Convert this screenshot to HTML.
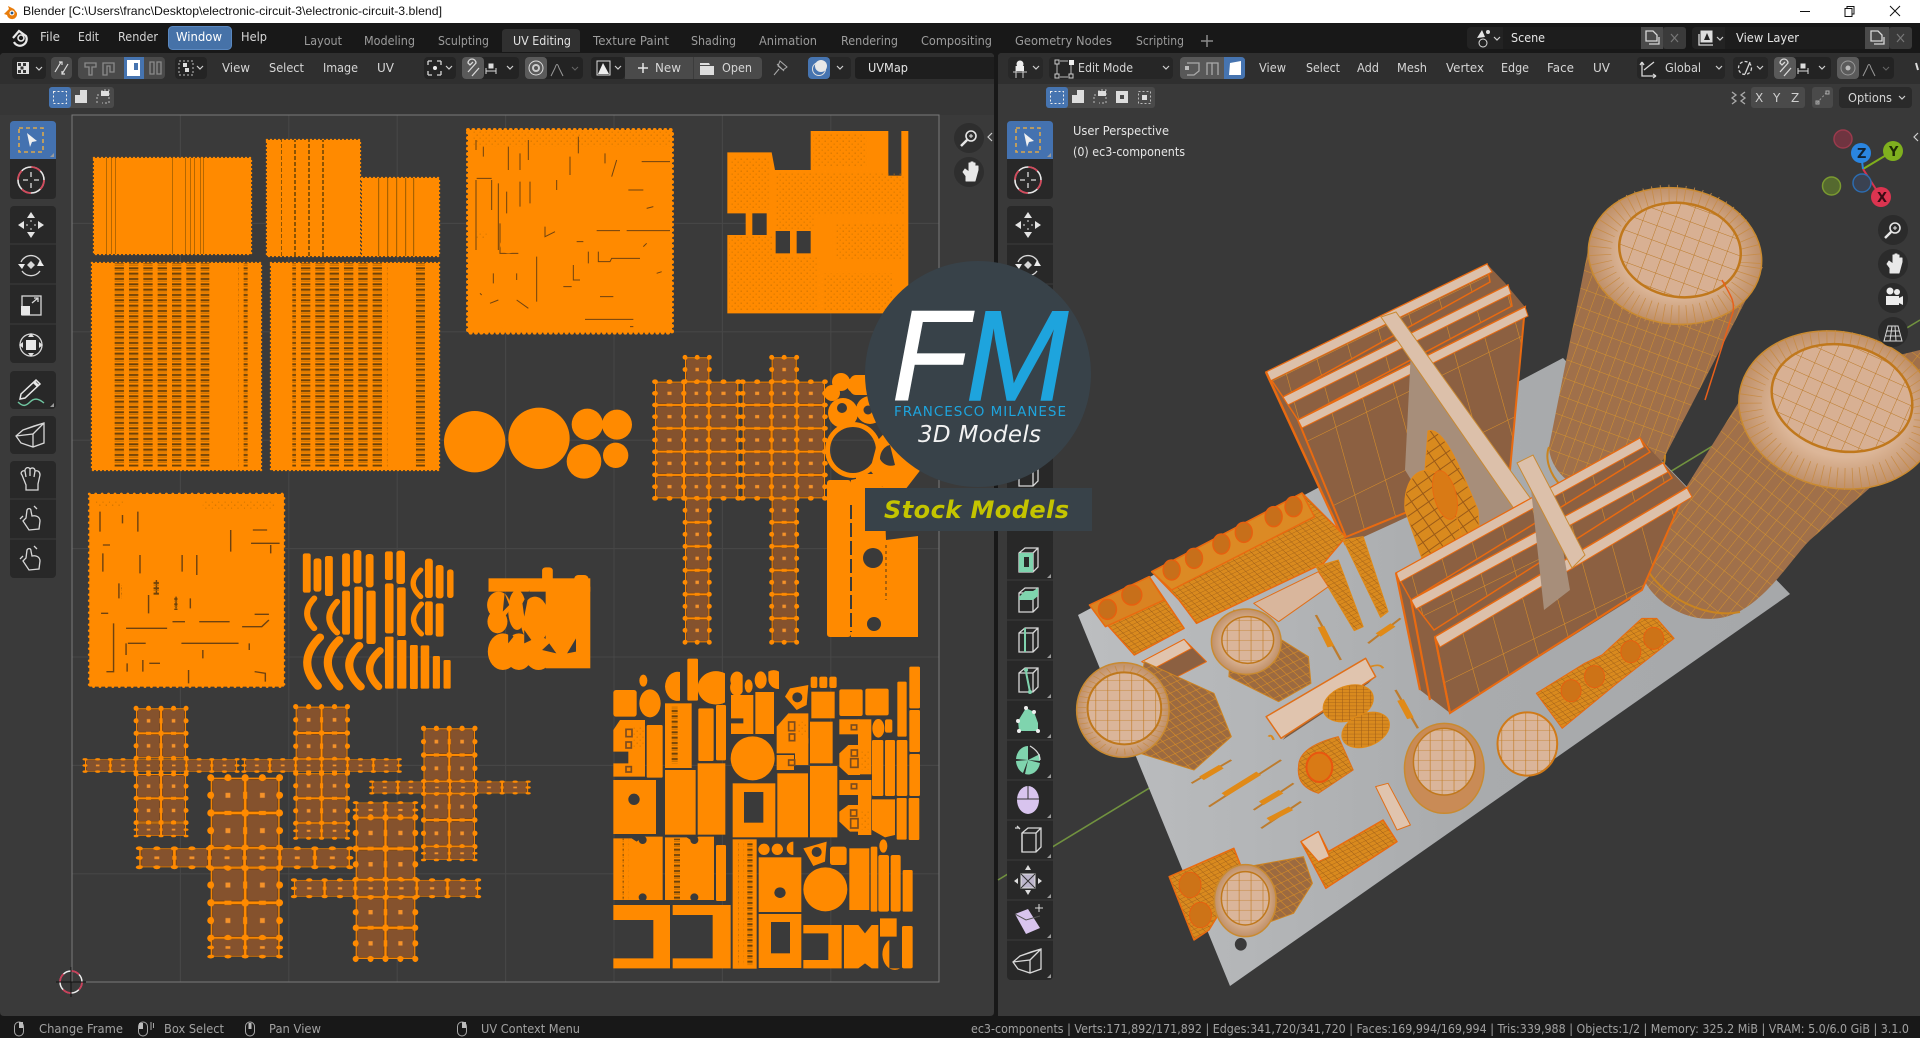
<!DOCTYPE html>
<html><head><meta charset="utf-8"><title>Blender</title>
<style>
html,body{margin:0;padding:0;background:#181818;overflow:hidden}
svg{display:block}
text{font-family:"DejaVu Sans",sans-serif;font-size:12px}
.m{fill:#d6d6d6}.t{fill:#9c9c9c}.s{fill:#a2a2a2;font-size:12px}
.i{fill:none;stroke:#d8d8d8;stroke-width:1.3}
.w{fill:#e6e6e6}.ch{fill:none;stroke:#cfcfcf;stroke-width:1.2}
.o{fill:#ff8a00}
.e{fill:#ff8a00;stroke:#ff8a00;stroke-width:7;stroke-dasharray:0 12;stroke-linecap:round}
.k{stroke:#6e4210;stroke-width:3;fill:none}
.n{vector-effect:non-scaling-stroke}
rect[fill="url(#cell)"]{stroke:#ff8a00;stroke-width:20;stroke-dasharray:0 50;stroke-linecap:round}
</style></head><body>
<svg width="1920" height="1038" viewBox="0 0 1920 1038" xmlns="http://www.w3.org/2000/svg">
<defs>
<pattern id="cell" width="100" height="100" patternUnits="userSpaceOnUse">
<rect width="100" height="100" fill="#ff8a00"/>
<rect x="5" y="5" width="90" height="90" fill="#85522d" stroke="#6a3a10" stroke-width="2"/>
<rect x="43" y="43" width="14" height="14" fill="#f5922a"/>
<rect x="40" y="0" width="20" height="6" fill="#ff8a00"/><rect x="40" y="94" width="20" height="6" fill="#ff8a00"/>
<rect x="0" y="40" width="6" height="20" fill="#ff8a00"/><rect x="94" y="40" width="6" height="20" fill="#ff8a00"/>
<circle cx="0" cy="0" r="11" fill="#ff8a00"/><circle cx="100" cy="0" r="11" fill="#ff8a00"/><circle cx="0" cy="100" r="11" fill="#ff8a00"/><circle cx="100" cy="100" r="11" fill="#ff8a00"/>
</pattern>
<pattern id="dash" width="43" height="16" patternUnits="userSpaceOnUse"><rect x="0" y="2" width="28" height="6" fill="#6e4208"/><rect x="0" y="11" width="28" height="2" fill="#a96200"/></pattern>
<pattern id="vdash" width="14" height="6" patternUnits="userSpaceOnUse"><rect x="0" y="0" width="2" height="4" fill="#8d5403"/></pattern>
<pattern id="dots" width="18" height="18" patternUnits="userSpaceOnUse"><rect x="2" y="2" width="3" height="3" fill="#b86800"/><rect x="11" y="11" width="3" height="3" fill="#c97200"/></pattern>
<pattern id="gridf" width="108.4" height="108.4" patternUnits="userSpaceOnUse" x="72" y="115"><rect width="108.4" height="108.4" fill="none" stroke="#474747" stroke-width="1"/></pattern>
<pattern id="wb" width="34" height="70" patternUnits="userSpaceOnUse" patternTransform="matrix(.9 -.44 .27 .97 0 0)"><rect width="34" height="70" fill="#8c6041"/><path d="M0 0H34M0 0V70" stroke="#dd9128" stroke-width="1.100"/></pattern>
<pattern id="cy1" width="10" height="18" patternUnits="userSpaceOnUse" patternTransform="rotate(20)"><rect width="10" height="18" fill="#a0704a"/><path d="M0 0H10M0 0V18" stroke="#d3922e" stroke-width="1"/></pattern>
<pattern id="cy2" width="10" height="18" patternUnits="userSpaceOnUse" patternTransform="rotate(38)"><rect width="10" height="18" fill="#a0704a"/><path d="M0 0H10M0 0V18" stroke="#d3922e" stroke-width="1"/></pattern>
<pattern id="top" width="15" height="15" patternUnits="userSpaceOnUse" patternTransform="rotate(12)"><rect width="15" height="15" fill="#d8b093"/><path d="M0 0H15M0 0V15" stroke="#bb7a28" stroke-width="1"/></pattern>
<pattern id="top2" width="24" height="30" patternUnits="userSpaceOnUse"><rect width="24" height="30" fill="#dab59a"/><path d="M0 0H24M0 0V30" stroke="#c07a22" stroke-width="2.500"/></pattern>
<pattern id="fine" width="14" height="10" patternUnits="userSpaceOnUse" patternTransform="rotate(-35)"><rect width="14" height="10" fill="#d98a1e"/><path d="M0 0H14M0 0V10" stroke="#9a5a18" stroke-width="2"/></pattern>
<pattern id="fine3" width="16" height="22" patternUnits="userSpaceOnUse" patternTransform="rotate(-35)"><rect width="16" height="22" fill="#9c6a40"/><path d="M0 0H16M0 0V22" stroke="#d68c28" stroke-width="3"/></pattern>
<linearGradient id="pl" x1="0" y1="0" x2="1" y2="0"><stop offset="0" stop-color="#bcbec0"/><stop offset=".55" stop-color="#a9abad"/><stop offset="1" stop-color="#a6a8aa"/></linearGradient>
<radialGradient id="capb" cx=".5" cy=".5" r=".5"><stop offset=".6" stop-color="#dcb698"/><stop offset="1" stop-color="#c09068"/></radialGradient>

<g id="ic-sel"><rect x="-12" y="-12" width="24" height="24" fill="none" stroke="#d9a84e" stroke-width="1.6" stroke-dasharray="4 3"/><path d="M-4 -7L6 1L1 2L-1 7Z" fill="#f0f0f0"/></g>
<g id="ic-cur"><circle r="13" fill="none" stroke="#e8e8e8" stroke-width="1.6"/><circle r="13" fill="none" stroke="#d24a5c" stroke-width="1.8" stroke-dasharray="10 10.4"/><path d="M0 -8V-3M0 3V8M-8 0H-3M3 0H8" stroke="#ddd" stroke-width="1.3"/></g>
<g id="ic-mov" fill="#e4e4e4"><path d="M0 -13L4 -7H-4ZM0 13L4 7H-4ZM-13 0L-7 -4V4ZM13 0L7 -4V4Z"/><path d="M0 -5V-3M0 3V5M-5 0H-3M3 0H5" stroke="#e4e4e4"/></g>
<g id="ic-rot"><path d="M-10 -3A11 11 0 0 1 10 -3M9 6A11 11 0 0 1 -9 6" class="i"/><path d="M0 -4L4 0L0 4L-4 0Z" fill="#d8d8d8"/><path d="M-13 -1L-6 -1L-9 4ZM13 1L6 1L9 -5Z" fill="#ececec"/></g>
<g id="ic-scl"><rect x="-9" y="-9" width="19" height="19" class="i"/><rect x="-10" y="1" width="9" height="9" fill="#e8e8e8"/><path d="M1 -2L7 -7M3 -7H7V-3" class="i"/></g>
<g id="ic-trn"><circle r="11" class="i"/><rect x="-5" y="-5" width="10" height="10" fill="#e8e8e8"/><path d="M0 -12L3 -8H-3ZM0 12L3 8H-3ZM-12 0L-8 -3V3ZM12 0L8 -3V3Z" fill="#e0e0e0"/></g>
<g id="ic-ann"><path d="M-10 3L5 -11L9 -7L-6 7L-11 8Z" fill="none" stroke="#e8e8e8" stroke-width="1.500"/><path d="M3 -9L7 -5" stroke="#e8e8e8" stroke-width="3"/><path d="M-13 11C-8 16 -5 15 -1 11C3 7 7 7 13 12" fill="none" stroke="#6fc5a0" stroke-width="1.4"/></g>
<g id="ic-cube"><path d="M-15 2L-8 -4L13 -11V9L2 13L-10 9ZM-8 -4L3 -8L13 -11M2 13V0L-15 2M2 0L13 -11" class="i"/></g>
<g id="ic-hnd"><path d="M-9 -4C-11 -6 -9 -9 -6 -8V-9C-5 -12 -2 -12 -1 -10C1 -12 4 -11 4 -8C7 -9 9 -7 9 -4L7 5V11H-5V6ZM-6 -8L-5 -2M-1 -10V-3M4 -8L3 -2" class="i"/></g>
<g id="ic-hnd2"><path d="M-4 -8C-3 -10 0 -10 0 -7L1 -2C5 -3 9 -1 9 3L8 11L-2 12L-8 3L-5 0Z" class="i"/><path d="M-11 1L-8 -2M3 -12L6 -9" class="i"/></g>
<g id="ic-box"><path d="M-9 -7L-3 -12H10V7L5 12H-9ZM-9 -7H5V12M5 -7L10 -12" class="i"/></g>
</defs>

<!-- base -->
<rect width="1920" height="1038" fill="#181818"/>
<rect width="1920" height="23" fill="#fff"/>
<path d="M4 14L9 9L8 6L14 9L17 13A5 5 0 0 1 7 15Z" fill="#e87d0d"/><circle cx="12" cy="13" r="2.500" fill="#fff"/><circle cx="12" cy="13" r="1.400" fill="#265787"/>
<text x="23" y="15" textLength="419" lengthAdjust="spacingAndGlyphs" style="font-family:'Liberation Sans',sans-serif;font-size:12px" fill="#111">Blender [C:\Users\franc\Desktop\electronic-circuit-3\electronic-circuit-3.blend]</text>
<path d="M1800 11.5H1810" stroke="#111" stroke-width="1"/>
<rect x="1845" y="8.5" width="7" height="8" fill="#fff" stroke="#111"/><path d="M1847 8V6.5H1854V14H1852.500" fill="none" stroke="#111"/>
<path d="M1890 6L1900 16M1900 6L1890 16" stroke="#111"/>

<!-- top bar -->
<g fill="none"><path d="M13 38L19 31L26 36A6 6 0 0 1 14 42" stroke="#e8e8e8" stroke-width="2.2"/><circle cx="21" cy="38" r="3" stroke="#e8e8e8" stroke-width="1.6"/></g>
<text class="m" x="40" y="41" textLength="20" lengthAdjust="spacingAndGlyphs">File</text>
<text class="m" x="78" y="41" textLength="21" lengthAdjust="spacingAndGlyphs">Edit</text>
<text class="m" x="118" y="41" textLength="40" lengthAdjust="spacingAndGlyphs">Render</text>
<rect x="168.500" y="26.500" width="63" height="23" rx="4" fill="#4672a8" stroke="#5a88c0"/>
<text fill="#fff" x="176" y="41" textLength="46" lengthAdjust="spacingAndGlyphs">Window</text>
<text class="m" x="241" y="41" textLength="26" lengthAdjust="spacingAndGlyphs">Help</text>
<path d="M502 52V33Q502 29 506 29H576Q580 29 580 33V52Z" fill="#303030"/>
<g class="t">
<text x="304" y="45" textLength="38" lengthAdjust="spacingAndGlyphs">Layout</text>
<text x="364" y="45" textLength="51" lengthAdjust="spacingAndGlyphs">Modeling</text>
<text x="438" y="45" textLength="51" lengthAdjust="spacingAndGlyphs">Sculpting</text>
<text x="513" y="45" textLength="58" lengthAdjust="spacingAndGlyphs" style="fill:#e4e4e4">UV Editing</text>
<text x="593" y="45" textLength="76" lengthAdjust="spacingAndGlyphs">Texture Paint</text>
<text x="691" y="45" textLength="45" lengthAdjust="spacingAndGlyphs">Shading</text>
<text x="759" y="45" textLength="58" lengthAdjust="spacingAndGlyphs">Animation</text>
<text x="841" y="45" textLength="57" lengthAdjust="spacingAndGlyphs">Rendering</text>
<text x="921" y="45" textLength="71" lengthAdjust="spacingAndGlyphs">Compositing</text>
<text x="1015" y="45" textLength="97" lengthAdjust="spacingAndGlyphs">Geometry Nodes</text>
<text x="1136" y="45" textLength="48" lengthAdjust="spacingAndGlyphs">Scripting</text>
</g>
<path d="M1207 35V47M1201 41H1213" stroke="#8a8a8a" stroke-width="1.5"/>

<!-- scene -->
<rect x="1467" y="27" width="219" height="22" rx="4" fill="#232323"/>
<rect x="1503" y="27" width="138" height="22" fill="#1d1d1d"/>
<rect x="1641" y="27" width="22" height="22" fill="#4a4a4a"/><rect x="1663" y="27" width="23" height="22" rx="3" fill="#3a3a3a"/>
<circle cx="1483" cy="43" r="4" fill="none" stroke="#ddd"/><path d="M1477 38L1482 30L1485 37Z" fill="#e4e4e4"/><circle cx="1488" cy="32" r="2" fill="#ddd"/>
<path d="M1494 37L1497 40L1500 37" class="ch"/>
<text class="w" x="1511" y="42" textLength="34" lengthAdjust="spacingAndGlyphs">Scene</text>
<path d="M1646 41V31H1653L1657 35V41ZM1649 44H1659V37" class="i"/>
<path d="M1671 34L1678 42M1678 34L1671 42" stroke="#777" stroke-width="1.2"/>
<rect x="1692" y="27" width="220" height="22" rx="4" fill="#232323"/>
<rect x="1725" y="27" width="140" height="22" fill="#1d1d1d"/>
<rect x="1865" y="27" width="24" height="22" fill="#4a4a4a"/><rect x="1889" y="27" width="23" height="22" rx="3" fill="#3a3a3a"/>
<rect x="1701" y="31" width="11" height="11" fill="#ddd" stroke="#ddd"/><path d="M1704 40L1707 33L1710 40Z" fill="#232323"/><path d="M1699 34V45H1713" class="i"/>
<path d="M1717 37L1720 40L1723 37" class="ch"/>
<text class="w" x="1736" y="42" textLength="63" lengthAdjust="spacingAndGlyphs">View Layer</text>
<path d="M1871 41V31H1878L1882 35V41ZM1874 44H1884V37" class="i"/>
<path d="M1897 34L1904 42M1904 34L1897 42" stroke="#777" stroke-width="1.2"/>

<!-- LEFT EDITOR -->
<path d="M0 57Q0 53 4 53H990Q994 53 994 57V1012Q994 1016 990 1016H4Q0 1016 0 1012Z" fill="#3a3a3a"/>
<path d="M0 84V57Q0 53 4 53H990Q994 53 994 57V84Z" fill="#2f2f2f"/>
<rect x="0" y="84" width="994" height="31" fill="#363636"/>
<rect x="72" y="115" width="867" height="867" fill="url(#gridf)"/>
<rect x="72" y="115" width="867" height="867" fill="none" stroke="#7b7b7b"/>

<!-- RIGHT EDITOR -->
<path d="M998 57Q998 53 1002 53H1916Q1920 53 1920 57V1016H998Z" fill="#393939"/>
<path d="M998 84V57Q998 53 1002 53H1920V84Z" fill="#2f2f2f"/>

<!-- 3D SCENE -->
<g>
<path d="M998 880L1920 320" stroke="#71923f" stroke-width="1.6"/>
<path d="M1078 615L1563 358L1790 594L1230 986Z" fill="url(#pl)"/>

<!-- heat sink back -->
<path d="M1266 372L1346 545L1510 470L1525 307L1505 283L1487 264Z" fill="#8c6041"/>
<path d="M1266 372L1487 264L1490 282L1283 397Z" fill="url(#wb)" stroke="#e96a10" stroke-width="1.500"/>
<path d="M1283 397L1508 285L1512 306L1298 420Z" fill="url(#wb)" stroke="#e96a10" stroke-width="1.500"/>
<path d="M1298 420L1525 307L1510 470L1346 537Z" fill="url(#wb)" stroke="#e96a10" stroke-width="2"/>
<path d="M1266 372L1487 264L1492 272L1270 381Z" fill="#dcc0aa" stroke="#e96a10"/>
<path d="M1283 397L1508 285L1511 294L1288 405Z" fill="#dcc0aa" stroke="#e96a10"/>
<path d="M1298 420L1525 307L1528 316L1302 428Z" fill="#dcc0aa" stroke="#e96a10"/>
<path d="M1266 372L1346 545" stroke="#e96a10" stroke-width="2.500" fill="none"/>
<path d="M1411 350L1500 480L1524 530L1480 590L1405 470Z" fill="#a78e7a"/>
<path d="M1381 317L1396 312L1575 560L1560 575Z" fill="#dcc0aa" stroke="#c98a34"/>
<path d="M1428 431C1445 425 1465 480 1478 510L1480 540L1460 552L1425 470Z" fill="url(#fine)" stroke="#e58a18"/>
<path d="M1405 510C1402 470 1432 455 1450 490L1470 570L1440 610Z" fill="url(#fine)" stroke="#e58a18"/>
<ellipse cx="1445" cy="495" rx="11" ry="25" transform="rotate(-15 1445 495)" fill="#d97a15" stroke="#e96a10"/>

<!-- capacitor 1 -->
<path d="M1588 250L1549 447C1550 480 1600 520 1663 460L1763 267Z" fill="url(#cy1)"/>
<path d="M1549 447C1540 470 1570 510 1610 500C1640 495 1665 480 1665 455" fill="none" stroke="#c98420" stroke-width="2"/>
<ellipse cx="1675" cy="256" rx="87" ry="68" transform="rotate(8 1675 256)" fill="url(#capb)" stroke="#c98a30" stroke-width="1.500"/>
<ellipse cx="1675" cy="256" rx="75" ry="60" transform="rotate(8 1675 256)" fill="none" stroke="#c78c48" stroke-width="22" stroke-dasharray=".8 7"/>
<ellipse cx="1680" cy="250" rx="61" ry="47" transform="rotate(8 1680 250)" fill="url(#top)" stroke="#c0781c" stroke-width="2.500"/>
<path d="M1722 280C1730 295 1735 300 1733 312L1705 400" fill="none" stroke="#e8601a" stroke-width="1.500"/>

<!-- capacitor 2 -->
<path d="M1745 392L1641 560C1636 590 1680 625 1720 618C1760 612 1790 560 1810 540L1925 440L1920 350Z" fill="url(#cy2)"/>
<path d="M1641 555C1650 590 1700 620 1740 612" fill="none" stroke="#c98420" stroke-width="2"/>
<ellipse cx="1838" cy="410" rx="100" ry="78" transform="rotate(12 1838 410)" fill="url(#capb)" stroke="#c98a30" stroke-width="1.500"/>
<ellipse cx="1838" cy="410" rx="88" ry="68" transform="rotate(12 1838 410)" fill="none" stroke="#c78c48" stroke-width="22" stroke-dasharray=".8 7"/>
<ellipse cx="1842" cy="398" rx="71" ry="53" transform="rotate(12 1842 398)" fill="url(#top)" stroke="#c0781c" stroke-width="2.500"/>

<!-- heat sink front -->
<path d="M1396 573L1640 438L1663 463L1687 488L1630 600L1450 713L1420 690Z" fill="#8c6041"/>
<path d="M1396 573L1640 438L1650 452L1411 600Z" fill="url(#wb)" stroke="#e96a10" stroke-width="1.500"/>
<path d="M1411 600L1663 463L1672 478L1434 630Z" fill="url(#wb)" stroke="#e96a10" stroke-width="1.500"/>
<path d="M1435 637L1687 488L1642 590L1450 713Z" fill="url(#wb)" stroke="#e96a10" stroke-width="2"/>
<path d="M1396 573L1640 438L1644 447L1400 582Z" fill="#dcc0aa" stroke="#e96a10"/>
<path d="M1411 600L1663 463L1668 472L1416 609Z" fill="#dcc0aa" stroke="#e96a10"/>
<path d="M1435 637L1687 488L1692 497L1440 647Z" fill="#dcc0aa" stroke="#e96a10"/>
<path d="M1396 573L1420 690M1411 600L1430 700M1435 637L1450 713" stroke="#e96a10" stroke-width="2.200" fill="none"/>
<path d="M1530 480L1556 510L1570 590L1544 610Z" fill="#a78e7a"/>
<path d="M1517 463L1533 455L1585 555L1572 568Z" fill="#dcc0aa" stroke="#c98a34"/>

<!-- small components (crop coords) -->
<g transform="translate(1000,540) scale(.4975,.3333)" stroke-linejoin="round">
<path d="M180 195L300 110L370 265L270 345Z" fill="url(#fine)" stroke="#e96a10" stroke-width="1.500" vector-effect="non-scaling-stroke"/>
<path d="M180 195L300 110L330 180L212 260Z" fill="#d98322" stroke="#e96a10" stroke-width="1.500" vector-effect="non-scaling-stroke"/>
<ellipse cx="216" cy="208" rx="18" ry="30" fill="#c76f1a" stroke="#e6600f" stroke-width="1.500" vector-effect="non-scaling-stroke"/><ellipse cx="265" cy="165" rx="20" ry="30" fill="#c76f1a" stroke="#e6600f" stroke-width="1.500" vector-effect="non-scaling-stroke"/>
<path d="M305 95L607 -141L695 -9L650 70L395 250L360 180Z" fill="url(#fine)" stroke="#e96a10" stroke-width="1.500" vector-effect="non-scaling-stroke"/>
<path d="M305 95L607 -141L632 -70L345 150Z" fill="#dc8a24" stroke="#e96a10" stroke-width="1.500" vector-effect="non-scaling-stroke"/>
<g fill="#c76f1a" stroke="#e6600f" stroke-width="1.500"><ellipse class="n" cx="345" cy="90" rx="17" ry="30"/><ellipse class="n" cx="390" cy="55" rx="17" ry="30"/><ellipse class="n" cx="445" cy="12" rx="17" ry="30"/><ellipse class="n" cx="490" cy="-23" rx="17" ry="30"/><ellipse class="n" cx="550" cy="-70" rx="17" ry="30"/><ellipse class="n" cx="590" cy="-100" rx="17" ry="30"/></g>
<path d="M635 80L680 60L730 260L712 272Z" fill="url(#fine)" stroke="#e08a18" vector-effect="non-scaling-stroke"/>
<path d="M690 0L730 -10L780 215L765 232Z" fill="url(#fine)" stroke="#e08a18" vector-effect="non-scaling-stroke"/>
<path d="M510 190L640 95L660 140L560 245Z" fill="#d9b69c" stroke="#e0701a" vector-effect="non-scaling-stroke"/>
<path d="M285 365L370 298L415 365L350 415Z" fill="#8c6041" stroke="#e96a10" vector-effect="non-scaling-stroke"/>
<path d="M285 365L370 298L385 325L310 385Z" fill="#e0c4ae" stroke="#e96a10" vector-effect="non-scaling-stroke"/>
<!-- cyl mid -->
<path d="M470 210L620 350L625 430L560 485L460 410Z" fill="url(#fine3)" stroke="#cf8420" vector-effect="non-scaling-stroke"/>
<ellipse cx="495" cy="305" rx="70" ry="98" fill="url(#capb)" stroke="#c98a30" stroke-width="1.500" vector-effect="non-scaling-stroke"/>
<ellipse cx="498" cy="300" rx="52" ry="70" fill="url(#top2)" stroke="#bf781c" stroke-width="1.500" vector-effect="non-scaling-stroke"/>
<!-- cyl front-left -->
<path d="M290 365L430 460L465 590L390 690L260 630Z" fill="url(#fine3)" stroke="#cf8420" vector-effect="non-scaling-stroke"/>
<ellipse cx="247" cy="510" rx="93" ry="142" fill="url(#capb)" stroke="#c98a30" stroke-width="1.500" vector-effect="non-scaling-stroke"/>
<ellipse cx="247" cy="510" rx="83" ry="125" fill="none" stroke="#c78c48" stroke-width="18" stroke-dasharray="2 14"/>
<ellipse cx="250" cy="505" rx="74" ry="108" fill="url(#top2)" stroke="#bf781c" stroke-width="2" vector-effect="non-scaling-stroke"/>
<!-- strip -->
<path d="M590 560L755 410L740 430L568 600Z" fill="#7a5a40"/>
<path d="M535 530L735 355L755 410L565 595Z" fill="#e0c4ae" stroke="#e0701a" stroke-width="1.500" vector-effect="non-scaling-stroke"/>
<path d="M745 380Q765 370 770 385M540 590Q545 580 550 600" stroke="#d88a20" stroke-width="5" fill="none"/>
<!-- half rounds -->
<ellipse cx="700" cy="490" rx="45" ry="60" transform="rotate(35 700 490)" fill="url(#fine)" stroke="#e08a18" vector-effect="non-scaling-stroke"/>
<ellipse cx="735" cy="570" rx="42" ry="58" transform="rotate(35 735 570)" fill="url(#fine)" stroke="#e08a18" vector-effect="non-scaling-stroke"/>
<!-- round thing -->
<path d="M600 680Q600 620 680 590L710 690L640 760Q595 740 600 680Z" fill="url(#fine)" stroke="#e0701a" vector-effect="non-scaling-stroke"/>
<ellipse cx="642" cy="682" rx="26" ry="44" fill="#d97a15" stroke="#e9560f" stroke-width="2" vector-effect="non-scaling-stroke"/>
<!-- resistors -->
<g stroke="#bd7c2e" stroke-width="5" fill="none"><path d="M385 730L465 660M420 800L565 660M510 810L590 730M525 865L605 785M635 225L685 360M795 450L840 565M740 310L805 235"/></g>
<g stroke="#e08a18" stroke-width="14" fill="none"><path d="M405 715L445 680M450 765L520 700M525 790L565 755M540 840L585 805M645 260L665 320M805 480L825 535M760 285L790 255"/></g>
<!-- strip small -->
<path d="M755 740L780 730L825 855L798 870Z" fill="#e0c4ae" stroke="#e0701a" vector-effect="non-scaling-stroke"/>
<!-- L -->
<path d="M605 905L640 875L660 935L770 840L798 905L655 1045Z" fill="url(#fine)" stroke="#e96a10" stroke-width="1.500" vector-effect="non-scaling-stroke"/>
<path d="M605 905L640 875L662 950L640 965Z" fill="#e0c4ae" stroke="#e96a10" vector-effect="non-scaling-stroke"/>
<!-- circles -->
<ellipse cx="893" cy="685" rx="80" ry="135" fill="#c98b56" stroke="#c98a30" stroke-width="1.500" vector-effect="non-scaling-stroke"/>
<ellipse cx="893" cy="665" rx="62" ry="100" fill="url(#top2)" stroke="#c0781c" stroke-width="1.500" vector-effect="non-scaling-stroke"/>
<ellipse cx="1060" cy="612" rx="60" ry="95" fill="url(#top2)" stroke="#d07a18" stroke-width="2" vector-effect="non-scaling-stroke"/>
<!-- connector right -->
<path d="M1078 460L1175 370L1210 345L1290 235L1320 235L1355 295L1240 430L1130 565Z" fill="url(#fine)" stroke="#e96a10" vector-effect="non-scaling-stroke"/>
<g fill="#cd7317" stroke="#e6600f"><ellipse class="n" cx="1148" cy="452" rx="20" ry="33"/><ellipse class="n" cx="1195" cy="410" rx="20" ry="33"/><ellipse class="n" cx="1268" cy="335" rx="20" ry="33"/><ellipse class="n" cx="1314" cy="295" rx="20" ry="33"/></g>
<!-- bottom connector + cyl -->
<path d="M340 1010L470 925L490 1000L420 1170L390 1200Z" fill="url(#fine)" stroke="#e96a10" stroke-width="1.500" vector-effect="non-scaling-stroke"/>
<g fill="#cd7317" stroke="#e6600f"><ellipse class="n" cx="382" cy="1035" rx="22" ry="38"/><ellipse class="n" cx="403" cy="1125" rx="22" ry="38"/></g>
<path d="M480 985L610 950L628 1030L590 1120L480 1180Z" fill="url(#fine3)" stroke="#cf8420" vector-effect="non-scaling-stroke"/>
<ellipse cx="493" cy="1082" rx="62" ry="108" fill="url(#capb)" stroke="#c98a30" stroke-width="1.500" vector-effect="non-scaling-stroke"/>
<ellipse cx="493" cy="1075" rx="48" ry="80" fill="url(#top2)" stroke="#bf781c" stroke-width="1.500" vector-effect="non-scaling-stroke"/>
<ellipse cx="484" cy="1213" rx="12" ry="19" fill="#3a3a3a"/>
</g>
</g>

<!-- UV ISLANDS: solid upper left -->
<g>
<g class="e" style="stroke-width:2.500;stroke-dasharray:0 4">
<rect x="94" y="158" width="157" height="96"/><rect x="267" y="140" width="93" height="116"/><rect x="362" y="178" width="77" height="78"/>
<rect x="92" y="263" width="169" height="207"/><rect x="271" y="263" width="168" height="207"/>
</g>
<g fill="#b56700">
<rect x="106" y="158" width="1" height="96"/><rect x="111" y="158" width="1" height="96"/><rect x="115" y="158" width="1" height="96"/><rect x="172" y="158" width="1" height="96"/><rect x="185" y="158" width="1" height="96"/><rect x="190" y="158" width="1" height="96"/><rect x="194" y="158" width="1" height="96"/><rect x="200" y="158" width="1" height="96"/><rect x="203" y="158" width="1" height="96"/>
</g>
<rect x="281" y="140" width="50" height="116" fill="url(#vdash)"/>
<rect x="378" y="178" width="1.200" height="78" fill="#a96200"/><rect x="387" y="178" width="1.200" height="78" fill="#a96200"/><rect x="396" y="178" width="1.200" height="78" fill="#a96200"/><rect x="405" y="178" width="1.200" height="78" fill="#a96200"/><rect x="413" y="178" width="1.200" height="78" fill="#a96200"/>
<g transform="scale(.3333)">
<rect x="340" y="790" width="288" height="610" fill="url(#dash)"/>
<rect x="715" y="790" width="28" height="610" fill="url(#dash)"/>
<rect x="877" y="790" width="285" height="610" fill="url(#dash)"/>
<rect x="1248" y="790" width="28" height="610" fill="url(#dash)"/>
</g>
</g>

<!-- UV islands crop5 coords -->
<g transform="translate(440,110) scale(.33333)">
<rect class="e" x="84" y="60" width="612" height="608" style="stroke-width:12;stroke-dasharray:0 16"/>
<rect x="100" y="60" width="590" height="50" fill="url(#dots)"/>
<g class="k">
<path d="M108 90V120M130 110V140M205 110V180M240 130V180M265 90V150M390 140V195M415 80V130M495 130V160M530 150L515 200M605 155H690M110 205H155M108 210V420M155 210V300M175 220V420M200 245V310M240 215V290M270 215V280M350 210V240M315 350V380L345 365M470 362H540M560 362H690M565 240H610M620 295L640 290M620 400L610 410M445 425V460M475 425V455H510L515 445H600M290 440V575M400 465V510H420M410 395H430M650 490L665 485M480 560H520M435 628H580M570 650H580M180 340V430L235 430M160 490V520M230 490V510M120 550L125 555M175 570L150 580M230 570L265 595M370 530H395"/>
</g>
<rect x="110" y="365" width="30" height="20" fill="url(#dots)"/>
<g class="o"><circle cx="130" cy="623" r="47"/><circle cx="218" cy="623" r="45"/><circle cx="205" cy="405" r="25"/></g>
<path class="o" d="M862 127H995L1005 180H1112V63H1345V197H1384V63H1405V610H862V375H917V310H862Z"/>
<g fill="#3a3a3a"><rect x="937" y="310" width="43" height="65"/><rect x="1007" y="363" width="43" height="67"/><rect x="1070" y="363" width="42" height="67"/></g>
<path fill="url(#dots)" d="M870 140H990V300H870ZM1120 70H1280V170H1120ZM1010 190H1390V310H1120V360H1010ZM1190 340H1390V450H1190ZM868 380H1000V600H868ZM1000 440H1130V600H1000ZM1150 490H1360V600H1150Z"/>
<g class="o"><circle cx="104" cy="995" r="92"/><circle cx="297" cy="985" r="92"/><circle cx="442" cy="943" r="47"/><circle cx="531" cy="944" r="45"/><circle cx="432" cy="1054" r="52"/><circle cx="527" cy="1036" r="38"/></g>
<!-- brown grid top -->
<g transform="translate(645,815) scale(.87,.7)"><rect width="100" height="500" fill="url(#cell)"/></g>
<g transform="translate(732,815) scale(.74,.7)"><rect width="100" height="500" fill="url(#cell)"/></g>
<g transform="translate(806,815) scale(.89,.7)"><rect width="100" height="500" fill="url(#cell)"/></g>
<g transform="translate(908,815) scale(.87,.7)"><rect width="100" height="500" fill="url(#cell)"/></g>
<g transform="translate(995,815) scale(.75,.7)"><rect width="100" height="500" fill="url(#cell)"/></g>
<g transform="translate(1070,815) scale(.85,.7)"><rect width="100" height="500" fill="url(#cell)"/></g>
<g transform="translate(735,742) scale(.73,.73)"><rect width="100" height="100" fill="url(#cell)"/></g>
<g transform="translate(995,742) scale(.75,.73)"><rect width="100" height="100" fill="url(#cell)"/></g>
<g transform="translate(735,1165) scale(.73,.72)"><rect width="100" height="600" fill="url(#cell)"/></g>
<g transform="translate(995,1165) scale(.75,.72)"><rect width="100" height="600" fill="url(#cell)"/></g>
</g>

<!-- right pile -->
<g class="o">
<circle cx="841" cy="382" r="9"/><circle cx="832" cy="393" r="8"/><circle cx="855" cy="385" r="8"/><rect x="850" y="375" width="40" height="20" rx="6"/>
<circle cx="843" cy="413" r="15"/><circle cx="870" cy="410" r="14"/><circle cx="881" cy="395" r="10"/>
<path d="M853 422a28 28 0 1 0 .1 0Zm0 5a23 23 0 1 1 -.1 0Z" fill-rule="evenodd"/>
<path d="M878 440L892 425L905 450L922 468L905 490L885 490L870 470Z"/>
<rect x="827" y="480" width="24" height="157" rx="3"/>
<path d="M851 480L870 476L884 488L886 540L918 536V637H851Z"/>
<rect x="856" y="474" width="30" height="12"/>
</g>
<circle cx="842" cy="408" r="5" fill="#3a3a3a"/><circle cx="868" cy="410" r="4.500" fill="#3a3a3a"/>
<path d="M880 459a12 14 0 0 1 10 -14l5 20a12 12 0 0 1 -15 -6Z" fill="#3a3a3a"/>
<circle cx="873" cy="558" r="10" fill="#3a3a3a"/><circle cx="874" cy="624" r="7" fill="#3a3a3a"/>
<path d="M851 505V632" stroke="#3a3a3a" stroke-width="2" stroke-dasharray="14 4"/><path d="M886 545V600" stroke="#8e5410" stroke-width="1.500" stroke-dasharray="3 3"/>

<!-- crop 6 coords -->
<g transform="translate(60,480) scale(.3571,.3333)">
<rect class="e" x="82" y="42" width="545" height="578" style="stroke-width:8;stroke-dasharray:0 18"/>
<g class="k" style="stroke-width:4">
<path d="M112 95V155M218 95V155M175 105V130M120 195H140M120 220V275M224 225V280M342 225V275M383 225V285M478 150V215M540 150H580M535 190H615M590 195V220M165 310V355M270 300V340M325 350V385M365 355V385M248 345V400M115 400H135M315 425H350M390 425H475M510 440H565L585 420M545 403H585M185 445H300M185 490V525M190 490H240M232 540V575M250 550H280M130 575L150 575V430M188 550V575M545 575L575 580V605M360 570V610M400 510V535M530 490V510M340 490H500"/>
</g>
<rect x="158" y="315" width="15" height="40" fill="url(#dash)"/><rect x="262" y="305" width="15" height="40" fill="url(#dash)"/><rect x="320" y="350" width="15" height="40" fill="url(#dash)"/>
<rect x="100" y="60" width="80" height="20" fill="url(#dots)"/><rect x="400" y="60" width="200" height="30" fill="url(#dots)"/>
<!-- stripes -->
<g class="o">
<rect x="680" y="220" width="22" height="118" rx="6"/><rect x="710" y="235" width="22" height="100" rx="8"/><rect x="742" y="228" width="22" height="120" rx="6"/><rect x="790" y="220" width="22" height="100" rx="8"/><rect x="822" y="210" width="22" height="100" rx="8"/><rect x="856" y="222" width="22" height="100" rx="8"/><rect x="910" y="214" width="22" height="86" rx="6"/><rect x="942" y="212" width="24" height="100" rx="8"/><rect x="1022" y="236" width="22" height="118" rx="8"/><rect x="1052" y="255" width="22" height="100" rx="8"/><rect x="1084" y="268" width="18" height="86" rx="8"/>
<rect x="790" y="332" width="22" height="132" rx="6"/><rect x="824" y="320" width="24" height="158" rx="6"/><rect x="858" y="332" width="26" height="160" rx="6"/><rect x="910" y="310" width="24" height="150" rx="6"/><rect x="944" y="322" width="24" height="146" rx="6"/><rect x="1022" y="364" width="22" height="102" rx="6"/><rect x="1052" y="370" width="22" height="100" rx="6"/>
<rect x="910" y="470" width="24" height="156" rx="4"/><rect x="944" y="480" width="26" height="146" rx="4"/><rect x="980" y="495" width="22" height="132" rx="4"/><rect x="1010" y="496" width="24" height="130" rx="4"/><rect x="1044" y="528" width="20" height="98" rx="4"/><rect x="1074" y="540" width="20" height="86" rx="4"/>
</g>
<g fill="none" stroke="#ff8a00" stroke-linecap="round">
<path d="M712 355Q672 400 712 445" stroke-width="17"/><path d="M776 365Q732 415 776 458" stroke-width="17"/><path d="M1010 270Q968 310 1010 350" stroke-width="15"/><path d="M1012 372Q968 420 1012 462" stroke-width="15"/>
<path d="M728 472Q660 545 722 618" stroke-width="23"/><path d="M782 480Q718 545 782 620" stroke-width="23"/><path d="M838 497Q780 555 842 620" stroke-width="23"/><path d="M896 512Q840 565 892 620" stroke-width="21"/>
</g>
<!-- blob -->
<g class="o"><rect x="1200" y="295" width="285" height="40"/><rect x="1350" y="262" width="30" height="50" rx="10"/><rect x="1440" y="285" width="40" height="40" rx="12"/>
<rect x="1360" y="320" width="125" height="245"/>
<ellipse cx="1228" cy="375" rx="32" ry="40"/><ellipse cx="1225" cy="425" rx="28" ry="35"/><ellipse cx="1240" cy="515" rx="42" ry="55"/><ellipse cx="1280" cy="390" rx="25" ry="60"/><ellipse cx="1285" cy="515" rx="40" ry="55"/><ellipse cx="1330" cy="420" rx="40" ry="70"/><ellipse cx="1340" cy="520" rx="40" ry="50"/></g>
<path d="M1245 340L1258 375L1240 395ZM1315 330L1295 370L1300 410ZM1255 450L1270 470L1255 490ZM1300 450L1320 480L1300 490ZM1350 510L1370 490L1390 520ZM1420 520L1445 475L1445 515Z" fill="#3a3a3a"/>
<!-- clusters -->
<g transform="translate(213,685) scale(.7,.75)"><rect width="200" height="200" fill="url(#cell)"/></g>
<g transform="translate(213,882) scale(.7,.73)"><rect width="200" height="200" fill="url(#cell)"/></g>
<g transform="translate(213,1030) scale(.7,.38)"><rect width="200" height="100" fill="url(#cell)"/></g>
<g transform="translate(70,838) scale(.71,.37)"><rect width="600" height="100" fill="url(#cell)"/></g>
<g transform="translate(660,680) scale(.725,.79)"><rect width="200" height="200" fill="url(#cell)"/></g>
<g transform="translate(660,880) scale(.725,.75)"><rect width="200" height="200" fill="url(#cell)"/></g>
<g transform="translate(660,1030) scale(.725,.45)"><rect width="200" height="100" fill="url(#cell)"/></g>
<g transform="translate(515,838) scale(.725,.37)"><rect width="600" height="100" fill="url(#cell)"/></g>
<g transform="translate(1018,745) scale(.72,.8)"><rect width="200" height="200" fill="url(#cell)"/></g>
<g transform="translate(1018,940) scale(.72,.8)"><rect width="200" height="200" fill="url(#cell)"/></g>
<g transform="translate(1018,1100) scale(.72,.4)"><rect width="200" height="100" fill="url(#cell)"/></g>
<g transform="translate(873,905) scale(.73,.35)"><rect width="600" height="100" fill="url(#cell)"/></g>
<g transform="translate(422,893) scale(.965,1.06)"><rect width="200" height="200" fill="url(#cell)"/></g>
<g transform="translate(422,1162) scale(.965,1.065)"><rect width="200" height="200" fill="url(#cell)"/></g>
<g transform="translate(422,1375) scale(.965,.55)"><rect width="200" height="100" fill="url(#cell)"/></g>
<g transform="translate(222,1105) scale(.983,.57)"><rect width="600" height="100" fill="url(#cell)"/></g>
<g transform="translate(828,968) scale(.835,.44)"><rect width="200" height="100" fill="url(#cell)"/></g>
<g transform="translate(828,1012) scale(.835,.94)"><rect width="200" height="200" fill="url(#cell)"/></g>
<g transform="translate(828,1250) scale(.835,.935)"><rect width="200" height="200" fill="url(#cell)"/></g>
<g transform="translate(655,1200) scale(.86,.5)"><rect width="600" height="100" fill="url(#cell)"/></g>
</g>

<!-- bottom right cluster crop 7 -->
<g transform="translate(600,640) scale(.33333)">
<g class="o">
<rect x="40" y="150" width="70" height="80" rx="8"/><ellipse cx="130" cy="122" rx="12" ry="18"/><ellipse cx="150" cy="190" rx="32" ry="42"/>
<path d="M195 140A38 45 0 0 1 240 96V182A38 45 0 0 1 195 140Z"/><rect x="262" y="56" width="32" height="126" rx="4"/><path d="M375 100A55 50 0 1 0 375 187Z"/>
<path d="M393 130A20 25 0 0 1 428 106V155A20 25 0 0 1 393 130Z"/><ellipse cx="446" cy="138" rx="12" ry="20"/><ellipse cx="482" cy="120" rx="18" ry="26"/><path d="M505 95A30 30 0 0 1 537 95V147A30 30 0 0 1 505 120Z"/>
<rect x="466" y="156" width="56" height="126"/>
<path d="M393 165H460V282H393V250H430V235H393Z"/>
<path d="M570 145L625 135L620 195L590 210L555 170Z"/><rect x="632" y="110" width="20" height="34" rx="6"/><rect x="658" y="110" width="24" height="34" rx="6"/><rect x="688" y="110" width="22" height="34" rx="6"/>
<rect x="634" y="155" width="70" height="80"/>
<rect x="718" y="148" width="70" height="80" rx="6"/><rect x="796" y="146" width="70" height="80" rx="6"/>
<rect x="892" y="125" width="28" height="165" rx="4"/><rect x="928" y="80" width="32" height="125" rx="4"/><rect x="928" y="210" width="32" height="126" rx="4"/><rect x="928" y="342" width="32" height="126" rx="4"/>
<path d="M40 270L60 240H135V335H40ZM40 370H85V330H135V410H40Z"/>
<rect x="140" y="255" width="48" height="158" rx="4"/><rect x="195" y="190" width="80" height="194"/>
<rect x="295" y="205" width="46" height="158" rx="4"/><rect x="348" y="195" width="30" height="166" rx="4"/>
<circle cx="458" cy="355" r="66"/>
<path d="M530 260L565 220H625V310L585 340H530Z"/><rect x="585" y="295" width="40" height="80"/><rect x="530" y="345" width="52" height="45"/><rect x="630" y="245" width="68" height="125"/>
<rect x="718" y="238" width="60" height="45"/><rect x="774" y="238" width="40" height="165"/>
<path d="M718 340L745 315H780V405H745L718 380Z"/>
<ellipse cx="835" cy="265" rx="18" ry="28"/><rect x="855" y="238" width="22" height="40" rx="6"/>
<rect x="816" y="300" width="34" height="168" rx="4"/><rect x="855" y="300" width="30" height="168" rx="4"/><rect x="890" y="300" width="32" height="168" rx="4"/>
<rect x="40" y="420" width="128" height="162"/>
<rect x="195" y="390" width="92" height="194"/><rect x="293" y="370" width="83" height="214"/>
<rect x="398" y="430" width="128" height="162"/><rect x="532" y="400" width="92" height="192"/><rect x="630" y="378" width="82" height="214"/>
<rect x="718" y="420" width="60" height="45"/><rect x="774" y="420" width="40" height="165"/>
<path d="M718 515L745 495H790V575H750L718 545Z"/>
<path d="M816 478H885V585L855 592L816 570Z"/><rect x="890" y="474" width="30" height="125" rx="3"/><rect x="926" y="474" width="32" height="126" rx="3"/>
<path d="M40 595H95L110 605L130 590H188V780H40Z"/><path d="M195 592H260L280 605L295 590H342V780H195Z"/><rect x="348" y="615" width="30" height="168" rx="4"/>
<path d="M40 795H210V985H40V955H160V840H40Z"/><path d="M218 795H392V985H218V955H338V825H218Z"/>
<rect x="398" y="598" width="72" height="388"/>
<circle cx="492" cy="628" r="17"/><circle cx="532" cy="628" r="17"/><path d="M580 605V645A20 20 0 0 1 580 605Z"/>
<path d="M610 625L680 605L675 665L640 678Z"/><rect x="690" y="620" width="50" height="55" rx="8"/>
<rect x="476" y="652" width="128" height="164"/>
<circle cx="676" cy="748" r="66"/><rect x="748" y="625" width="60" height="185"/><rect x="812" y="620" width="20" height="195" rx="4"/><ellipse cx="850" cy="618" rx="12" ry="20"/>
<rect x="835" y="645" width="32" height="170" rx="6"/><rect x="872" y="645" width="30" height="170" rx="6"/><rect x="908" y="690" width="30" height="125" rx="4"/>
<rect x="476" y="822" width="128" height="162"/>
<path d="M610 855H725V985H610V960H685V880H610Z"/><path d="M732 855H775L795 880L815 855H835V985H815L795 970L775 985H732Z"/>
<path d="M840 835H890V890H840ZM868 900A35 45 0 1 0 900 985H868Z"/><rect x="906" y="858" width="32" height="127" rx="5"/>
</g>
<g fill="#3a3a3a"><circle cx="592" cy="172" r="15"/><circle cx="102" cy="478" r="17"/><rect x="432" y="456" width="58" height="92"/><rect x="513" y="846" width="57" height="94"/><circle cx="650" cy="636" r="15"/><ellipse cx="540" cy="758" rx="17" ry="16"/><circle cx="128" cy="600" r="12"/><circle cx="283" cy="600" r="12"/><circle cx="128" cy="772" r="12"/><circle cx="283" cy="772" r="12"/></g>
<g fill="url(#dash)"><rect x="414" y="605" width="16" height="372"/><rect x="442" y="605" width="16" height="372"/><rect x="209" y="200" width="24" height="170"/><rect x="68" y="596" width="18" height="184"/><rect x="222" y="596" width="18" height="184"/></g>
<g fill="none" stroke="#7c4c1e" stroke-width="5"><rect x="78" y="268" width="18" height="22"/><rect x="78" y="306" width="16" height="18"/><rect x="78" y="380" width="16" height="16"/><rect x="566" y="246" width="18" height="26"/><rect x="568" y="282" width="16" height="20"/><rect x="566" y="360" width="18" height="16"/><rect x="754" y="330" width="18" height="18"/><rect x="752" y="356" width="22" height="26"/><rect x="752" y="510" width="18" height="18"/><rect x="752" y="536" width="22" height="28"/><rect x="754" y="255" width="16" height="14"/><rect x="754" y="432" width="16" height="14"/></g>
<rect x="100" y="260" width="30" height="60" fill="url(#dots)"/><rect x="590" y="245" width="30" height="40" fill="url(#dots)"/><rect x="780" y="330" width="30" height="60" fill="url(#dots)"/><rect x="780" y="510" width="30" height="60" fill="url(#dots)"/>
</g>

<!-- 2D cursor -->
<g transform="translate(71,982)"><circle r="11" fill="none" stroke="#eee" stroke-width="1.500"/><circle r="11" fill="none" stroke="#c9405a" stroke-width="1.800" stroke-dasharray="8.600 8.700"/><path d="M0 -15V15M-15 0H15" stroke="#111" stroke-width="1"/></g>

<!-- LEFT TOOLBAR -->
<g id="tb">
<path d="M10 163V125Q10 121 14 121H52Q56 121 56 125V159Z" fill="#4472b0"/>
<path d="M10 159H56V195Q56 199 52 199H14Q10 199 10 195Z" fill="#282828"/>
<rect x="10" y="206" width="46" height="157" rx="4" fill="#282828"/>
<rect x="10" y="371" width="46" height="38" rx="4" fill="#282828"/>
<rect x="10" y="416" width="46" height="38" rx="4" fill="#282828"/>
<rect x="10" y="461" width="46" height="117" rx="4" fill="#282828"/>
<path d="M10 244H56M10 284H56M10 324H56M10 499H56M10 539H56" stroke="#3d3d3d"/>
<path d="M54 153V157H50Z M54 403V407H50Z" fill="#9a9a9a"/>
</g>
<use href="#ic-sel" x="31" y="140"/><use href="#ic-cur" x="31" y="180"/><use href="#ic-mov" x="31" y="225"/><use href="#ic-rot" x="31" y="265"/><use href="#ic-scl" x="31" y="305"/><use href="#ic-trn" x="31" y="345"/><use href="#ic-ann" x="31" y="391"/><use href="#ic-cube" x="31" y="434"/><use href="#ic-hnd" x="31" y="479"/><use href="#ic-hnd2" x="31" y="518"/><use href="#ic-hnd2" x="31" y="558"/>

<!-- UV view buttons -->
<circle cx="969" cy="138" r="15" fill="#2e2e2e"/><circle cx="969" cy="172" r="15" fill="#2e2e2e"/>
<circle cx="971" cy="136" r="5" fill="none" stroke="#e6e6e6" stroke-width="1.600"/><path d="M967 140L961 146" stroke="#e6e6e6" stroke-width="2.500"/><path d="M969 136H973M971 134V138" stroke="#e6e6e6"/>
<path d="M963 172L966 176V181H975L978 170V166L976 166L975 170V163H973V170V162H971V170V163H969V172L965 169Z" fill="#e8e8e8" stroke="#e8e8e8" stroke-linejoin="round"/>
<path d="M992 133L988 137L992 141" class="ch"/>

<!-- LEFT HEADER -->
<g>
<rect x="12" y="57" width="34" height="22" rx="4" fill="#242424"/>
<rect x="17" y="62" width="12" height="12" fill="#e0e0e0"/><path d="M18 63h3v3h-3zM23 63h3v3h-3zM20.500 66.500h3v3h-3zM18 70h3v3h-3zM23 70h3v3h-3z" fill="#333"/>
<path d="M36 67L39 70L42 67" class="ch"/>
<rect x="51" y="57" width="21" height="22" rx="4" fill="#4a4a4a"/><path d="M55 72L61 62M59 62H62V65M68 64L62 74M65 74H62V71" fill="none" stroke="#ddd" stroke-width="1.200"/>
<rect x="78" y="57" width="87" height="22" rx="4" fill="#4a4a4a"/><rect x="124" y="57" width="20" height="22" fill="#4674b0"/>
<g class="i" style="stroke:#8b8b8b"><path d="M85 63H96V67H92V75H89V67H85ZM103 63H114V72H110V66H107V75H103ZM150 62H154V74H150ZM157 62H161V74H157Z"/></g>
<rect x="127" y="60" width="13" height="16" fill="#fff"/><path d="M134 63H138V70H134Z" fill="#4674b0"/>
<rect x="175" y="57" width="32" height="22" rx="4" fill="#242424"/>
<rect x="179" y="61" width="14" height="14" fill="none" stroke="#bbb" stroke-dasharray="2 2"/><rect x="183" y="63" width="4" height="4" fill="#ddd"/><rect x="185" y="68" width="4" height="4" fill="#ddd"/>
<path d="M197 66L200 69L203 66" class="ch"/>
<text class="m" x="222" y="72" textLength="28" lengthAdjust="spacingAndGlyphs">View</text>
<text class="m" x="269" y="72" textLength="35" lengthAdjust="spacingAndGlyphs">Select</text>
<text class="m" x="323" y="72" textLength="35" lengthAdjust="spacingAndGlyphs">Image</text>
<text class="m" x="377" y="72" textLength="17" lengthAdjust="spacingAndGlyphs">UV</text>
<rect x="424" y="57" width="32" height="22" rx="4" fill="#242424"/>
<path d="M428 61H432M428 61V65M441 61H437M441 61V65M428 75H432M428 75V71M441 75H437M441 75V71" class="i"/><circle cx="435" cy="68" r="2" fill="#eee"/>
<path d="M446 66L449 69L452 66" class="ch"/>
<rect x="462" y="57" width="57" height="22" rx="4" fill="#232323"/><rect x="462" y="57" width="22" height="22" rx="4" fill="#595959"/>
<path d="M468 72L476 63A4 4 0 0 0 468 63L470 65L473 62M472 76L479 68" class="i"/>
<path d="M486 74V68M496 74V68M486 71H496M489 64H493V68H489Z" fill="#ddd" stroke="#ddd"/><path d="M507 66L510 69L513 66" class="ch"/>
<rect x="525" y="57" width="58" height="22" rx="4" fill="#232323"/><rect x="525" y="57" width="22" height="22" rx="4" fill="#5b5b5b"/>
<circle cx="536" cy="68" r="7" fill="none" stroke="#ddd"/><circle cx="536" cy="68" r="4" fill="#ccc"/><circle cx="536" cy="68" r="2" fill="#555"/>
<path d="M551 76L555 68Q557 61 559 68L563 76" fill="none" stroke="#999"/><path d="M572 67L575 70L578 67" stroke="#666" fill="none"/>
<rect x="591" y="57" width="34" height="22" rx="4" fill="#232323"/>
<rect x="597" y="61" width="13" height="14" fill="none" stroke="#ddd"/><path d="M598 74L603 63L609 74Z" fill="#eee"/><path d="M615 66L618 69L621 66" class="ch"/>
<rect x="625" y="57" width="137" height="22" rx="4" fill="#4a4a4a"/><rect x="625" y="57" width="10" height="22" fill="#4a4a4a"/>
<path d="M693.500 57V79" stroke="#3c3c3c"/>
<path d="M638 68H648M643 63V73" stroke="#e6e6e6" stroke-width="1.500"/>
<text class="m" x="655" y="72" textLength="26" lengthAdjust="spacingAndGlyphs">New</text>
<path d="M700 63H709L710 65H700ZM700 66H714V75H700Z" fill="#ddd"/>
<text class="m" x="722" y="72" textLength="30" lengthAdjust="spacingAndGlyphs">Open</text>
<path d="M774 75L779 69M777 64L784 71M780 61L787 67L783 70L778 66Z" fill="none" stroke="#aaa"/>
<rect x="808" y="57" width="43" height="22" rx="4" fill="#262626"/><rect x="808" y="57" width="22" height="22" rx="4" fill="#4674b0"/>
<circle cx="819" cy="69" r="6.500" fill="none" stroke="#e0e0e0"/><circle cx="821" cy="66" r="6" fill="#e8e8e8"/>
<path d="M837 66L840 69L843 66" class="ch"/>
<path d="M859 57H994V79H859Q855 79 855 75V61Q855 57 859 57Z" fill="#1e1e1e"/>
<text class="w" x="868" y="72" textLength="40" lengthAdjust="spacingAndGlyphs">UVMap</text>
<rect x="49" y="87" width="65" height="21" rx="3" fill="#4a4a4a"/><rect x="49" y="87" width="22" height="21" rx="3" fill="#4674b0"/>
<rect x="53.500" y="91.500" width="13" height="12" fill="none" stroke="#eee" stroke-dasharray="2 2"/>
<path d="M75 103V95H80V90H87V103Z" fill="#ddd"/><path d="M97 103V95H102V90H109V103H102" fill="none" stroke="#bbb" stroke-dasharray="2 2"/><rect x="101" y="91" width="8" height="5" fill="#ddd"/>
</g>

<!-- RIGHT HEADER -->
<g>
<rect x="1008" y="57" width="35" height="22" rx="4" fill="#282828"/>
<path d="M1013 72H1027M1016 66V78M1023 66V78" stroke="#ccc" stroke-width="1"/><circle cx="1020" cy="64" r="3.500" fill="#eee"/><rect x="1016" y="66" width="8" height="5" fill="#eee"/>
<path d="M1033 66L1036 69L1039 66" class="ch"/>
<rect x="1049" y="57" width="124" height="22" rx="4" fill="#262626"/>
<path d="M1057 64V74M1071 64V74M1060 61H1068M1060 77H1068" stroke="#bbb"/><rect x="1055" y="60" width="4" height="4" fill="none" stroke="#ccc"/><rect x="1069" y="60" width="5" height="5" fill="#eee"/><rect x="1055" y="74" width="4" height="4" fill="none" stroke="#ccc"/><rect x="1069" y="74" width="4" height="4" fill="none" stroke="#ccc"/>
<text class="m" x="1078" y="72" textLength="55" lengthAdjust="spacingAndGlyphs">Edit Mode</text>
<path d="M1163 66L1166 69L1169 66" class="ch"/>
<rect x="1180" y="57" width="65" height="22" rx="4" fill="#585858"/><path d="M1224 57H1241Q1245 57 1245 61V75Q1245 79 1241 79H1224Z" fill="#4674b0"/>
<path d="M1187 63H1199V71L1194 75H1187" class="i" style="stroke:#aaa"/><rect x="1185" y="66" width="4" height="4" fill="#bbb"/>
<path d="M1207 75V63H1218V75M1212 63V75" class="i" style="stroke:#aaa"/>
<path d="M1230 63L1241 61V75H1229Z" fill="#fff"/>
<text class="m" x="1259" y="72" textLength="27" lengthAdjust="spacingAndGlyphs">View</text>
<text class="m" x="1306" y="72" textLength="34" lengthAdjust="spacingAndGlyphs">Select</text>
<text class="m" x="1357" y="72" textLength="22" lengthAdjust="spacingAndGlyphs">Add</text>
<text class="m" x="1397" y="72" textLength="30" lengthAdjust="spacingAndGlyphs">Mesh</text>
<text class="m" x="1446" y="72" textLength="38" lengthAdjust="spacingAndGlyphs">Vertex</text>
<text class="m" x="1501" y="72" textLength="28" lengthAdjust="spacingAndGlyphs">Edge</text>
<text class="m" x="1547" y="72" textLength="27" lengthAdjust="spacingAndGlyphs">Face</text>
<text class="m" x="1593" y="72" textLength="17" lengthAdjust="spacingAndGlyphs">UV</text>
<rect x="1637" y="57" width="88" height="22" rx="4" fill="#262626"/>
<path d="M1642 62V76H1656M1644 70L1654 62M1642 62L1640 65M1642 62L1644 65M1656 76L1653 74M1656 76L1653 78" class="i"/>
<text class="m" x="1665" y="72" textLength="36" lengthAdjust="spacingAndGlyphs">Global</text>
<path d="M1716 66L1719 69L1722 66" class="ch"/>
<rect x="1733" y="57" width="35" height="22" rx="4" fill="#262626"/>
<circle cx="1745" cy="68" r="6.500" class="i" stroke-dasharray="3 2"/><path d="M1750 62L1745 74" class="i"/><path d="M1757 66L1760 69L1763 66" class="ch"/>
<rect x="1774" y="57" width="57" height="22" rx="4" fill="#232323"/><rect x="1774" y="57" width="22" height="22" rx="4" fill="#595959"/>
<path d="M1780 72L1788 63A4 4 0 0 0 1780 63L1782 65L1785 62M1784 76L1791 68" class="i"/>
<path d="M1798 74V68M1808 74V68M1798 71H1808M1801 64H1805V68H1801Z" fill="#ddd" stroke="#ddd"/><path d="M1819 66L1822 69L1825 66" class="ch"/>
<rect x="1837" y="57" width="57" height="22" rx="4" fill="#232323"/><rect x="1837" y="57" width="22" height="22" rx="4" fill="#5b5b5b"/>
<circle cx="1848" cy="68" r="7" fill="none" stroke="#999"/><circle cx="1848" cy="68" r="2.500" fill="#bbb"/>
<path d="M1863 76L1867 68Q1869 61 1871 68L1875 76" fill="none" stroke="#999"/><path d="M1883 67L1886 70L1889 67" stroke="#666" fill="none"/>
<path d="M1916 63L1918 70" stroke="#ddd" stroke-width="2"/>
<rect x="1046" y="87" width="109" height="21" rx="3" fill="#4a4a4a"/><rect x="1046" y="87" width="22" height="21" rx="3" fill="#4674b0"/>
<rect x="1050.500" y="91.500" width="13" height="12" fill="none" stroke="#eee" stroke-dasharray="2 2"/>
<path d="M1072 103V95H1077V90H1084V103Z" fill="#ddd"/><path d="M1094 103V95H1099V90H1106V103H1099" fill="none" stroke="#bbb" stroke-dasharray="2 2"/><rect x="1098" y="91" width="8" height="5" fill="#ddd"/>
<path d="M1116 91H1128V103H1116ZM1120 95H1124V99H1120Z" fill="#ddd" fill-rule="evenodd"/>
<rect x="1138.500" y="91.500" width="12" height="12" fill="none" stroke="#bbb" stroke-dasharray="2 2"/><rect x="1142" y="95" width="5" height="5" fill="#ddd"/>
<path d="M1732 92L1736 95L1732 98L1736 101L1732 104M1745 92L1741 95L1745 98L1741 101L1745 104" class="i" style="stroke:#aaa"/>
<rect x="1751" y="87" width="54" height="21" rx="3" fill="#4a4a4a"/>
<text fill="#cfcfcf" x="1755" y="102">X</text><text fill="#cfcfcf" x="1773" y="102">Y</text><text fill="#cfcfcf" x="1791" y="102">Z</text>
<rect x="1812" y="87" width="21" height="21" rx="3" fill="#4a4a4a"/><path d="M1817 103L1827 92" stroke="#999" stroke-dasharray="2 2"/><rect x="1816" y="101" width="3" height="3" fill="none" stroke="#aaa"/><rect x="1826" y="91" width="3" height="3" fill="none" stroke="#aaa"/>
<rect x="1839" y="87" width="73" height="21" rx="4" fill="#2a2a2a"/>
<text class="m" x="1848" y="102" textLength="44" lengthAdjust="spacingAndGlyphs">Options</text>
<path d="M1899 96L1902 99L1905 96" class="ch"/>
</g>

<!-- RIGHT TOOLBAR -->
<use href="#tb" x="997"/>
<rect x="1007" y="363" width="46" height="46" fill="#282828"/>
<rect x="1007" y="416" width="46" height="124" fill="#282828"/>
<rect x="1007" y="540" width="46" height="440" rx="4" fill="#282828"/>
<path d="M1007 580H1053M1007 620H1053M1007 660H1053M1007 700H1053M1007 740H1053M1007 780H1053M1007 820H1053M1007 860H1053M1007 900H1053M1007 940H1053" stroke="#3d3d3d"/>
<use href="#ic-sel" x="1028" y="140"/><use href="#ic-cur" x="1028" y="180"/><use href="#ic-mov" x="1028" y="225"/><use href="#ic-rot" x="1028" y="265"/><use href="#ic-box" x="1028" y="474"/>

<g transform="translate(1028,560)"><use href="#ic-box"/><path d="M-9 -7H5V12H-9ZM-4 -3H1V7H-4Z" fill="#7fd4ae" fill-rule="evenodd"/></g>
<g transform="translate(1028,600)"><use href="#ic-box"/><path d="M-9 -3L-3 -9H5L10 -12V-4L5 0H-9Z" fill="#7fd4ae"/></g>
<g transform="translate(1028,640)"><use href="#ic-box"/><path d="M-3 -7V12M-3 -12V-7" stroke="#7fd4ae" stroke-width="2"/></g>
<g transform="translate(1028,680)"><use href="#ic-box"/><path d="M-2 -8L2 12" stroke="#7fd4ae" stroke-width="2"/><circle cx="-2" cy="-10" r="2" fill="#7fd4ae"/><circle cx="2" cy="12" r="2" fill="#7fd4ae"/></g>
<g transform="translate(1028,720)"><path d="M-9 11L-10 1L-2 -12L6 -8L10 3V11Z" fill="#7fd4ae"/><g fill="#eee"><circle cx="-10" cy="1" r="2"/><circle cx="-9" cy="11" r="2"/><circle cx="10" cy="11" r="2"/><circle cx="-2" cy="-12" r="2"/><circle cx="6" cy="-8" r="2"/></g></g>
<g transform="translate(1028,760)"><path d="M0 0L-12 -1A12 14 0 0 1 0 -14ZM0 0L-12 1A12 14 0 0 0 -5 13ZM0 0L-3 14A12 14 0 0 0 12 3ZM0 0L12 1V-6Z" fill="#7fd4ae"/><path d="M2 -14Q12 -8 12 0" class="i"/></g>
<g transform="translate(1028,800)"><ellipse rx="11" ry="14" fill="#d8c4ee"/><path d="M-11 -1H11M0 -14V-1" stroke="#333"/></g>
<g transform="translate(1028,840)"><use href="#ic-box" x="3"/><path d="M-6 -7V12M-11 -14L-8 -11M-13 -12H-9" class="i"/></g>
<g transform="translate(1028,880)"><path d="M-7 -6H7V8H-7Z" fill="#bdb6cc" stroke="#ddd"/><path d="M-7 -6L7 8M7 -6L-7 8" stroke="#333"/><path d="M0 -15L3 -10H-3ZM0 15L3 10H-3ZM-14 1L-10 -2V4ZM14 1L10 -2V4Z" fill="#ddd"/></g>
<g transform="translate(1028,920)"><path d="M-13 -6L0 -11L12 8L-2 14Z" fill="#d8c4ee"/><path d="M-13 -6L-2 0L12 -4" stroke="#555" fill="none"/><path d="M11 -16V-8M7 -12H15" stroke="#ddd"/></g>
<g transform="translate(1028,960)"><use href="#ic-cube"/></g>
<path d="M1051 574V578H1047ZM1051 654V658H1047ZM1051 694V698H1047ZM1051 734V738H1047ZM1051 774V778H1047ZM1051 814V818H1047ZM1051 854V858H1047ZM1051 894V898H1047ZM1051 934V938H1047ZM1051 974V978H1047Z" fill="#9a9a9a"/>

<text class="w" x="1073" y="135" textLength="96" lengthAdjust="spacingAndGlyphs">User Perspective</text>
<text class="w" x="1073" y="156" textLength="112" lengthAdjust="spacingAndGlyphs">(0) ec3-components</text>

<!-- gizmo -->
<path d="M1863 169L1893 151" stroke="#7fae1c" stroke-width="2"/><path d="M1863 169L1881 197" stroke="#d8324e" stroke-width="2"/><path d="M1863 169L1861 153" stroke="#2a85dc" stroke-width="2"/>
<circle cx="1843" cy="139" r="9" fill="#6f3440" stroke="#9a3a4c" stroke-width="1.500"/>
<circle cx="1831.500" cy="186" r="9" fill="#55692f" stroke="#7a9a30" stroke-width="1.500"/>
<circle cx="1862" cy="183" r="9" fill="#3a4252" stroke="#2c6cb0" stroke-width="1.500"/>
<circle cx="1861" cy="153" r="10" fill="#2a85e0"/><circle cx="1893" cy="151" r="10" fill="#7fb01e"/><circle cx="1881" cy="197" r="10" fill="#dc3450"/>
<text x="1857" y="158" style="font-size:13px;font-weight:bold" fill="#123">Z</text><text x="1889" y="156" style="font-size:13px;font-weight:bold" fill="#1e2a05">Y</text><text x="1877" y="202" style="font-size:13px;font-weight:bold" fill="#3a0a14">X</text>

<!-- nav buttons -->
<circle cx="1893" cy="230" r="15" fill="#2b2b2b"/><circle cx="1893" cy="264" r="15" fill="#2b2b2b"/><circle cx="1893" cy="298" r="15" fill="#2b2b2b"/><circle cx="1893" cy="332" r="15" fill="#2b2b2b"/>
<circle cx="1895" cy="228" r="5" fill="none" stroke="#e6e6e6" stroke-width="1.600"/><path d="M1891 232L1885 238" stroke="#e6e6e6" stroke-width="2.500"/><path d="M1893 228H1897M1895 226V230" stroke="#e6e6e6"/>
<path d="M1887 264L1890 268V273H1899L1902 262V258L1900 258L1899 262V255H1897V262V254H1895V262V255H1893V264L1889 261Z" fill="#e8e8e8" stroke="#e8e8e8" stroke-linejoin="round"/>
<circle cx="1890" cy="291" r="3.500" fill="#eee"/><circle cx="1897" cy="292" r="3" fill="#eee"/><rect x="1886" y="296" width="13" height="9" fill="#eee"/><path d="M1899 298L1903 296V305L1899 303Z" fill="#eee"/>
<path d="M1888 326H1898L1902 341H1884ZM1892 326L1890 341M1895 326L1896 341M1887 331H1899M1886 336H1900" class="i" style="stroke-width:1"/>
<path d="M1918 133L1914 137L1918 141" class="ch"/>

<!-- LOGO -->
<rect x="865" y="488" width="227" height="43" fill="#384249"/>
<circle cx="978" cy="374" r="113" fill="#384249"/>
<text x="892" y="400" textLength="76" lengthAdjust="spacingAndGlyphs" style="font-family:'Liberation Sans',sans-serif;font-size:128px;font-style:italic" fill="#fff" stroke="#fff" stroke-width="1.500">F</text>
<text x="966" y="400" textLength="102" lengthAdjust="spacingAndGlyphs" style="font-family:'Liberation Sans',sans-serif;font-size:128px;font-style:italic" fill="#1ea4dd" stroke="#1ea4dd" stroke-width="1.500">M</text>
<text x="894" y="416" textLength="172" style="font-family:'DejaVu Sans',sans-serif;font-size:13.500px" fill="#1ea4dd">FRANCESCO MILANESE</text>
<text x="918" y="442" textLength="123" style="font-family:'DejaVu Sans',sans-serif;font-size:23px;font-style:oblique" fill="#f2f2f2">3D Models</text>
<text x="884" y="518" textLength="185" style="font-family:'DejaVu Sans',sans-serif;font-size:24px;font-weight:bold;font-style:oblique" fill="#c4c400">Stock Models</text>

<!-- STATUS BAR -->
<g fill="none" stroke="#a8a8a8" stroke-width="1">
<rect x="14.500" y="1022" width="9" height="14" rx="4.500"/><rect x="138.500" y="1022" width="9" height="14" rx="4.500"/><rect x="245.500" y="1022" width="9" height="14" rx="4.500"/><rect x="457.500" y="1022" width="9" height="14" rx="4.500"/>
<path d="M151 1022V1030M153.500 1023V1028" />
</g>
<path d="M19 1022H23V1028H19ZM139 1023H143V1029H139ZM248.500 1023H251.500V1029H248.500ZM462 1022H466V1028H462Z" fill="#bcbcbc"/>
<text class="s" x="39" y="1033" textLength="84" lengthAdjust="spacingAndGlyphs">Change Frame</text>
<text class="s" x="164" y="1033" textLength="60" lengthAdjust="spacingAndGlyphs">Box Select</text>
<text class="s" x="269" y="1033" textLength="52" lengthAdjust="spacingAndGlyphs">Pan View</text>
<text class="s" x="481" y="1033" textLength="99" lengthAdjust="spacingAndGlyphs">UV Context Menu</text>
<text class="s" x="971" y="1033" textLength="938" lengthAdjust="spacingAndGlyphs">ec3-components | Verts:171,892/171,892 | Edges:341,720/341,720 | Faces:169,994/169,994 | Tris:339,988 | Objects:1/2 | Memory: 325.2 MiB | VRAM: 5.0/6.0 GiB | 3.1.0</text>
</svg>
</body></html>
